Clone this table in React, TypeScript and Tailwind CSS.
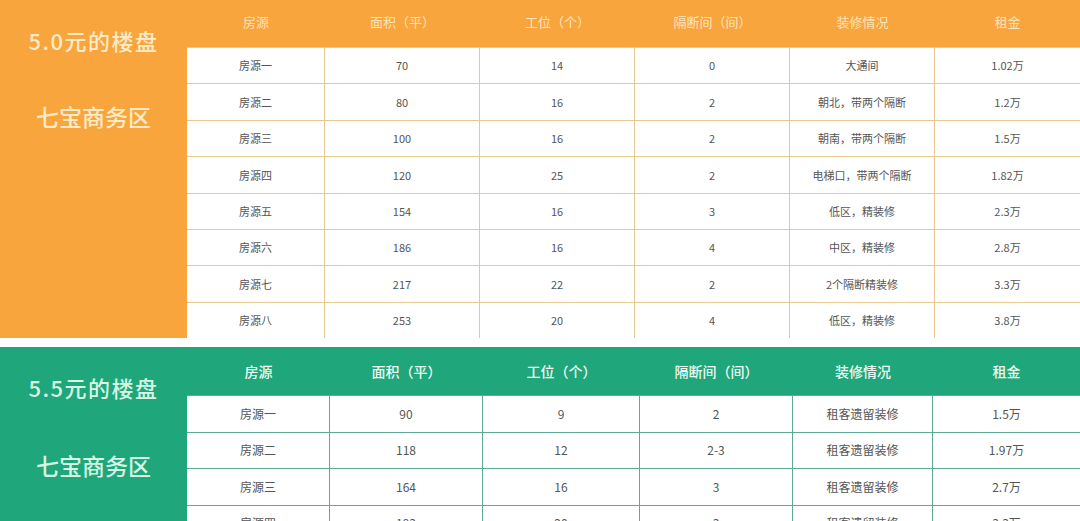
const font = { fontFamily: '"Noto Sans CJK SC", "Noto Sans", sans-serif' };

const headers = ["房源", "面积（平）", "工位（个）", "隔断间（间）", "装修情况", "租金"];

const orangeRows = [
  ["房源一", "70", "14", "0", "大通间", "1.02万"],
  ["房源二", "80", "16", "2", "朝北，带两个隔断", "1.2万"],
  ["房源三", "100", "16", "2", "朝南，带两个隔断", "1.5万"],
  ["房源四", "120", "25", "2", "电梯口，带两个隔断", "1.82万"],
  ["房源五", "154", "16", "3", "低区，精装修", "2.3万"],
  ["房源六", "186", "16", "4", "中区，精装修", "2.8万"],
  ["房源七", "217", "22", "2", "2个隔断精装修", "3.3万"],
  ["房源八", "253", "20", "4", "低区，精装修", "3.8万"],
];

const greenRows = [
  ["房源一", "90", "9", "2", "租客遗留装修", "1.5万"],
  ["房源二", "118", "12", "2-3", "租客遗留装修", "1.97万"],
  ["房源三", "164", "16", "3", "租客遗留装修", "2.7万"],
  ["房源四", "193", "20", "3", "租客遗留装修", "3.3万"],
];

function OrangeBlock() {
  return (
    <section className="flex h-[338px] bg-[#f9a53e]">
      <div className="flex w-[187px] shrink-0 flex-col items-center font-medium text-[#fdebc8]">
        <div className="mt-[26px] text-[22px] leading-[28px] tracking-[1.5px]">5.0元的楼盘</div>
        <div className="mt-[47px] text-[23px] leading-[30px]">七宝商务区</div>
      </div>
      <div className="flex flex-1 flex-col">
        <div className="grid h-[47px] grid-cols-[138px_155px_155px_155px_145px_145px] items-center text-center text-[13px] text-[#fde4bb]">
          {headers.map((h) => (
            <div key={h} className="-mt-[3px]">{h}</div>
          ))}
        </div>
        <div className="flex flex-1 flex-col bg-white">
          {orangeRows.map((r) => (
            <div
              key={r[0]}
              className="grid flex-1 grid-cols-[138px_155px_155px_155px_145px_145px] border-t border-[#e7c891] text-center text-[11px] text-[#555]"
            >
              {r.map((c, i) => (
                <div key={i} className="flex items-center justify-center border-r border-[#e7c891] last:border-r-0">
                  {c}
                </div>
              ))}
            </div>
          ))}
        </div>
      </div>
    </section>
  );
}

function GreenBlock() {
  return (
    <section className="mt-[9px] flex h-[220px] bg-[#1fa67b]">
      <div className="flex w-[187px] shrink-0 flex-col items-center font-medium text-[#d8f6e4]">
        <div className="mt-[26px] text-[22px] leading-[28px] tracking-[1.5px]">5.5元的楼盘</div>
        <div className="mt-[49px] text-[23px] leading-[30px]">七宝商务区</div>
      </div>
      <div className="flex flex-1 flex-col">
        <div className="grid h-[48px] shrink-0 grid-cols-[143px_153px_157px_153px_140px_147px] items-center text-center text-[14px] font-medium text-[#eefaf3]">
          {headers.map((h) => (
            <div key={h}>{h}</div>
          ))}
        </div>
        <div className="flex flex-col bg-white">
          {greenRows.map((r) => (
            <div
              key={r[0]}
              className="grid h-[36.5px] grid-cols-[143px_153px_157px_153px_140px_147px] border-t border-[#5fab95] text-center text-[12px] text-[#555]"
            >
              {r.map((c, i) => (
                <div key={i} className="flex items-center justify-center border-r border-[#5fab95] last:border-r-0">
                  {c}
                </div>
              ))}
            </div>
          ))}
        </div>
      </div>
    </section>
  );
}

export default function App() {
  return (
    <div className="h-[521px] w-[1080px] overflow-hidden bg-white" style={font}>
      <OrangeBlock />
      <GreenBlock />
    </div>
  );
}
